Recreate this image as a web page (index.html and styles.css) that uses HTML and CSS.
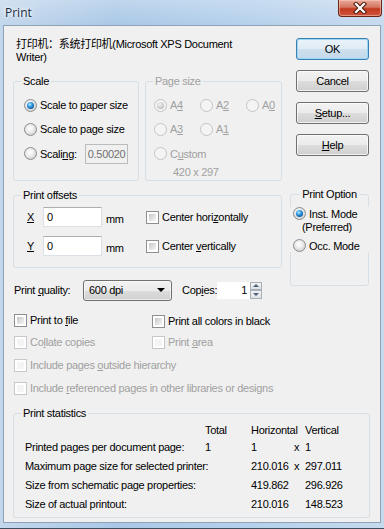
FILE: index.html
```html
<!DOCTYPE html>
<html lang="en">
<head>
    <meta charset="UTF-8">
    <link rel="stylesheet" href="styles.css">
    <title>Print</title>
</head>
<body>
<div class="window">
    <div class="titlebar">
        <span class="title">Print</span>
        <div class="close-btn">
            <svg width="14" height="12" viewBox="0 0 14 12">
                <path d="M3 2 L11 10 M11 2 L3 10" stroke="#4a1a10" stroke-width="4.2" stroke-linecap="square"/>
                <path d="M3 2 L11 10 M11 2 L3 10" stroke="#ffffff" stroke-width="2.2" stroke-linecap="square"/>
            </svg>
        </div>
    </div>

    <div class="client">
        <div class="top">
            <div class="left-col">
                <p class="printer">打印机：系统打印机(Microsoft XPS Document<br>Writer)</p>

                <div class="group-row">
                    <fieldset class="group scale">
                        <legend>Scale</legend>
                        <div class="opt"><span class="radio checked"></span><span>Scale to <u>p</u>aper size</span></div>
                        <div class="opt"><span class="radio"></span><span>Scale to page size</span></div>
                        <div class="opt last"><span class="radio"></span><span>Scali<u>n</u>g:</span><span class="edit scaling">0.50020</span></div>
                    </fieldset>

                    <fieldset class="group pagesize">
                        <legend>Page size</legend>
                        <div class="size-grid">
                            <div class="opt"><span class="radio checked"></span><span>A<u>4</u></span></div>
                            <div class="opt"><span class="radio"></span><span>A<u>2</u></span></div>
                            <div class="opt"><span class="radio"></span><span>A<u>0</u></span></div>
                            <div class="opt"><span class="radio"></span><span>A<u>3</u></span></div>
                            <div class="opt"><span class="radio"></span><span>A<u>1</u></span></div>
                        </div>
                        <div class="opt last"><span class="radio"></span><span>C<u>u</u>stom</span></div>
                        <div class="custom-size">420 x 297</div>
                    </fieldset>
                </div>

                <fieldset class="group offsets">
                    <legend>Print offsets</legend>
                    <div class="offset-grid">
                        <span class="axis"><u>X</u></span>
                        <span class="edit">0</span>
                        <span class="unit">mm</span>
                        <div class="check-item"><span class="checkbox"></span><span>Center hori<u>z</u>ontally</span></div>

                        <span class="axis"><u>Y</u></span>
                        <span class="edit">0</span>
                        <span class="unit">mm</span>
                        <div class="check-item"><span class="checkbox"></span><span>Center <u>v</u>ertically</span></div>
                    </div>
                </fieldset>

                <div class="quality-row">
                    <span class="quality-label">Print <u>q</u>uality:</span>
                    <div class="combo"><span>600 dpi</span><span class="combo-arrow"></span></div>
                    <span class="copies-label">Cop<u>i</u>es:</span>
                    <span class="copies-edit">1</span>
                    <div class="spinner">
                        <span class="spin up"></span>
                        <span class="spin down"></span>
                    </div>
                </div>
            </div>

            <div class="right-col">
                <div class="buttons">
                    <div class="btn default">OK</div>
                    <div class="btn">Cancel</div>
                    <div class="btn"><span><u>S</u>etup...</span></div>
                    <div class="btn"><span><u>H</u>elp</span></div>
                </div>

                <fieldset class="group option">
                    <legend>Print Option</legend>
                    <div class="option-list">
                        <div class="opt-line"><span class="radio checked"></span><span>Inst. Mode</span></div>
                        <div class="opt-sub">(Preferred)</div>
                        <div class="opt-line occ"><span class="radio"></span><span>Occ. Mode</span></div>
                    </div>
                </fieldset>
            </div>
        </div>

        <div class="checks">
            <div class="check-item"><span class="checkbox"></span><span>Print to <u>f</u>ile</span></div>
            <div class="check-item lower"><span class="checkbox"></span><span>Print all colors in black</span></div>
            <div class="check-item disabled"><span class="checkbox"></span><span>Co<u>l</u>late copies</span></div>
            <div class="check-item disabled"><span class="checkbox"></span><span>Print <u>a</u>rea</span></div>
            <div class="check-item disabled wide"><span class="checkbox"></span><span>Include pages <u>o</u>utside hierarchy</span></div>
            <div class="check-item disabled wide"><span class="checkbox"></span><span>Include <u>r</u>eferenced pages in other libraries or designs</span></div>
        </div>

        <fieldset class="group stats">
            <legend>Print statistics</legend>
            <div class="stats-grid">
                <span></span><span>Total</span><span>Horizontal</span><span></span><span>Vertical</span>

                <span>Printed pages per document page:</span><span>1</span><span>1</span><span class="times">x</span><span>1</span>

                <span>Maximum page size for selected printer:</span><span></span><span>210.016</span><span class="times">x</span><span>297.011</span>

                <span>Size from schematic page properties:</span><span></span><span>419.862</span><span></span><span>296.926</span>

                <span>Size of actual printout:</span><span></span><span>210.016</span><span></span><span>148.523</span>
            </div>
        </fieldset>
    </div>
</div>
</body>
</html>
```

FILE: styles.css
```css
body {
    margin: 0;
    padding: 0;
    font-family: "Liberation Sans", Arial, "Noto Sans CJK SC", sans-serif;
    font-size: 11px;
    letter-spacing: -0.3px;
    color: #000000;
}

u {
    text-decoration-thickness: 1px;
    text-underline-offset: 1px;
}

.window {
    width: 384px;
    height: 529px;
    box-sizing: border-box;
    background: linear-gradient(to right, #c3d7ec 0%, #aac8e6 30%, #b3cfeb 60%, #c6daee 100%);
    border-bottom: 1px solid #3e4f60;
    display: flex;
    flex-direction: column;
}

/* title bar */

.titlebar {
    height: 25px;
    display: flex;
    justify-content: space-between;
    align-items: flex-start;
    background: linear-gradient(to bottom, rgba(255, 255, 255, 0.25), rgba(255, 255, 255, 0));
}

.title {
    font-family: "Open Sans", "Noto Sans", sans-serif;
    font-size: 12px;
    letter-spacing: 0;
    color: #1b2a3a;
    margin: 4px 0 0 5px;
    text-shadow: 0 0 6px #ffffff, 0 0 3px #ffffff;
}

.close-btn {
    width: 44px;
    height: 17px;
    margin-right: 2px;
    box-sizing: border-box;
    border: 1px solid #6b2517;
    border-top: none;
    border-radius: 0 0 4px 4px;
    background: linear-gradient(to bottom, #e9a99a 0%, #d57560 45%, #c1391f 55%, #d0573d 100%);
    box-shadow: inset 0 0 0 1px rgba(255, 210, 200, 0.5);
    display: flex;
    align-items: center;
    justify-content: center;
}

/* client area */

.client {
    margin: 0 3px;
    height: 498px;
    box-sizing: border-box;
    border: 1px solid #8ea3b8;
    background-color: #f0f0f0;
    padding: 0 10px 0 9px;
}

.top {
    display: flex;
    gap: 8px;
}

.left-col {
    width: 269px;
}

.right-col {
    width: 79px;
    padding-top: 12px;
}

.printer {
    margin: 12px 0 0 3px;
    line-height: 13px;
    height: 26px;
}

/* group boxes: legend sits at the left edge, content is indented by padding-left */

.group {
    margin: 0;
    padding: 0;
    min-width: 0;
    box-sizing: border-box;
    border: 1px solid #d5dfe5;
    border-radius: 3px;
}

.group legend {
    padding: 0 2px;
    line-height: 13px;
}

.group-row {
    display: flex;
    gap: 6px;
    margin-top: 11px;
}

.scale {
    width: 126px;
    height: 106px;
    padding: 5px 0 0 10px;
}

.scale legend {
    margin-left: -3px;
}

.pagesize {
    width: 137px;
    height: 106px;
    padding: 5px 0 0 8px;
    color: #a0a0a0;
}

.pagesize legend {
    margin-left: -1px;
}

.opt {
    height: 24px;
    display: flex;
    align-items: center;
    white-space: nowrap;
}

.opt.last {
    height: 25px;
}

.size-grid {
    display: grid;
    grid-template-columns: 46px 46px 40px;
}

.custom-size {
    line-height: 13px;
    padding-left: 19px;
}

/* radio buttons */

.radio {
    width: 13px;
    height: 13px;
    flex: none;
    box-sizing: border-box;
    border-radius: 50%;
    border: 1px solid #8b8d8f;
    background: radial-gradient(circle at 45% 40%, #ffffff 0%, #f0f0f0 35%, #d2d2d2 75%, #c3c3c3 100%);
    margin-right: 3px;
    position: relative;
}

.radio.checked::after {
    content: "";
    position: absolute;
    inset: 2px;
    border-radius: 50%;
    background: radial-gradient(circle at 40% 35%, #b6ecff 0%, #2e95dc 40%, #0f5a9e 75%, #0b3b6e 100%);
}

.pagesize .radio {
    border-color: #c3c4c5;
    background: #f4f4f4;
}

.pagesize .radio.checked::after {
    background: radial-gradient(circle at 40% 35%, #f4f4f4 0%, #c8c8c8 60%, #a9a9a9 100%);
}

/* edit boxes */

.edit {
    display: flex;
    align-items: center;
    height: 20px;
    box-sizing: border-box;
    border: 1px solid #dbdfe6;
    border-top-color: #abadb3;
    background-color: #ffffff;
    padding-left: 3px;
}

.edit.scaling {
    width: 43px;
    margin-left: 8px;
    border-color: #bcbcbc;
    background-color: #f0f0f0;
    color: #707070;
    padding-left: 2px;
}

/* print offsets */

.offsets {
    margin-top: 8px;
    height: 79px;
    padding: 5px 0 0 13px;
}

.offsets legend {
    margin-left: -6px;
}

.offset-grid {
    display: grid;
    grid-template-columns: 16px 59px 44px auto;
    grid-template-rows: 20px 20px;
    row-gap: 9px;
    align-items: center;
}

.unit {
    padding-left: 4px;
    padding-top: 3px;
}

/* checkboxes */

.check-item {
    display: flex;
    align-items: center;
    white-space: nowrap;
}

.checkbox {
    width: 13px;
    height: 13px;
    flex: none;
    box-sizing: border-box;
    border: 1px solid #8e8f8f;
    background-color: #ffffff;
    margin-right: 3px;
    position: relative;
}

.checkbox::after {
    content: "";
    position: absolute;
    inset: 2px;
    background: linear-gradient(135deg, #c6c6c6 0%, #e4e4e4 60%, #f6f6f6 100%);
}

.check-item.disabled {
    color: #a0a0a0;
}

.check-item.disabled .checkbox {
    border-color: #c7c8c9;
}

.check-item.disabled .checkbox::after {
    background: #f4f4f4;
}

/* quality row */

.quality-row {
    margin-top: 12px;
    height: 20px;
    display: flex;
    align-items: center;
    padding-left: 1px;
}

.quality-label {
    width: 69px;
}

.combo {
    width: 89px;
    height: 21px;
    box-sizing: border-box;
    border: 1px solid #707070;
    border-radius: 3px;
    background: linear-gradient(to bottom, #f2f2f2 0%, #ebebeb 50%, #dddddd 50%, #cfcfcf 100%);
    box-shadow: inset 0 0 0 1px rgba(255, 255, 255, 0.6);
    display: flex;
    align-items: center;
    justify-content: space-between;
    padding: 0 6px 0 5px;
}

.combo-arrow {
    width: 0;
    height: 0;
    border-left: 4px solid transparent;
    border-right: 4px solid transparent;
    border-top: 4px solid #000000;
}

.copies-label {
    margin-left: 10px;
    width: 35px;
}

.copies-edit {
    width: 33px;
    height: 17px;
    box-sizing: border-box;
    background-color: #ffffff;
    border: 1px solid #ffffff;
    text-align: right;
    padding-right: 2px;
    line-height: 15px;
}

.spinner {
    width: 12px;
    height: 17px;
    display: flex;
    flex-direction: column;
}

.spin {
    flex: 1;
    box-sizing: border-box;
    border: 1px solid #a7afb9;
    background: linear-gradient(to bottom, #f3f3f3, #dde1e6);
    display: flex;
    align-items: center;
    justify-content: center;
}

.spin::after {
    content: "";
    width: 0;
    height: 0;
    border-left: 3px solid transparent;
    border-right: 3px solid transparent;
}

.spin.up::after {
    border-bottom: 3px solid #4a5f7c;
}

.spin.down::after {
    border-top: 3px solid #4a5f7c;
}

/* buttons */

.buttons {
    display: flex;
    flex-direction: column;
    gap: 10px;
    padding-left: 6px;
}

.btn {
    width: 73px;
    height: 22px;
    box-sizing: border-box;
    border: 1px solid #707070;
    border-radius: 3px;
    background: linear-gradient(to bottom, #f2f2f2 0%, #ebebeb 50%, #dddddd 50%, #cfcfcf 100%);
    box-shadow: inset 0 0 0 1px rgba(255, 255, 255, 0.7);
    display: flex;
    align-items: center;
    justify-content: center;
}

.btn.default {
    border-color: #3c7fb1;
    background: linear-gradient(to bottom, #eaf3f9 0%, #e0ecf5 50%, #cfe0ee 50%, #c2d8ea 100%);
    box-shadow: inset 0 0 0 1px #9ad7f5;
}

/* print option */

.option {
    margin-top: 32px;
    height: 98px;
    padding: 6px 0 0 0;
}

.option legend {
    margin: 0 auto;
}

.option-list {
    margin: 0 -2px 0 -1px;
    background-color: #f0f0f0;
    padding-left: 3px;
}

.opt-line {
    height: 13px;
    display: flex;
    align-items: center;
    white-space: nowrap;
}

.opt-sub {
    line-height: 14px;
    padding-left: 9px;
}

.opt-line.occ {
    margin-top: 5px;
}

/* checks area */

.checks {
    display: grid;
    grid-template-columns: 138px auto;
    grid-template-rows: 22px 22px 24px 22px;
    margin-top: 9px;
    padding-left: 1px;
}

.check-item.lower {
    padding-top: 2px;
}

.check-item.wide {
    grid-column: 1 / 3;
}

/* statistics */

.stats {
    margin-top: 8px;
    height: 111px;
    padding: 2px 0 0 11px;
}

.stats legend {
    margin-left: -4px;
}

.stats-grid {
    display: grid;
    grid-template-columns: 180px 46px 42px 12px auto;
    grid-template-rows: 16px 18px 19px 19px 19px;
    align-items: center;
    white-space: nowrap;
}

.times {
    padding-left: 1px;
}
```
